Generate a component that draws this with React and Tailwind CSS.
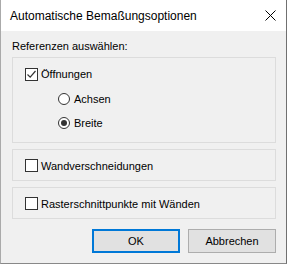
import React from 'react';

function CheckBox({ checked }) {
  return (
    <span className="w-[13px] h-[13px] border border-[#333333] bg-white flex items-center justify-center shrink-0">
      {checked && (
        <svg width="11" height="11" viewBox="0 0 11 11">
          <path d="M1.5 5.5 L4.2 8.2 L9.5 2" fill="none" stroke="#333333" strokeWidth="1.2" />
        </svg>
      )}
    </span>
  );
}

function Radio({ checked }) {
  return (
    <span className="w-[12px] h-[12px] rounded-full border border-[#333333] bg-white flex items-center justify-center shrink-0">
      {checked && <span className="w-[6px] h-[6px] rounded-full bg-[#333333]" />}
    </span>
  );
}

export default function App() {
  return (
    <div
      className="w-[287px] h-[264px] flex flex-col bg-[#f0f0f0] border-l border-r border-b border-l-[#aaaaaa] border-r-[#707070] border-b-[#888888] text-[11px] text-black"
      style={{ fontFamily: '"Liberation Sans", Arial, sans-serif' }}
    >
      {/* Title bar */}
      <div className="h-[31px] bg-white flex items-center justify-between pl-[9px] pr-[9px] shrink-0">
        <span className="text-[12px] leading-[16px]">Automatische Bemaßungsoptionen</span>
        <svg width="11" height="11" viewBox="0 0 11 11" className="mr-[1px]">
          <path d="M0.5 0.5 L10.5 10.5 M10.5 0.5 L0.5 10.5" stroke="#000000" strokeWidth="1" />
        </svg>
      </div>

      <div className="flex flex-col pl-[11px] pr-[10px] pt-[7px]">
        <div className="h-[16px] leading-[16px] mb-[3px]">Referenzen auswählen:</div>

        {/* Group 1 */}
        <div className="h-[86px] border border-[#dcdcdc] flex flex-col pt-[6px] pl-[12px]">
          <div className="h-[20px] flex items-center gap-[3px]">
            <CheckBox checked />
            <span className="leading-[16px]">Öffnungen</span>
          </div>
          <div className="h-[20px] mt-[5px] flex items-center gap-[4px] pl-[33px]">
            <Radio />
            <span className="leading-[16px]">Achsen</span>
          </div>
          <div className="h-[20px] mt-[4px] flex items-center gap-[4px] pl-[33px]">
            <Radio checked />
            <span className="leading-[16px]">Breite</span>
          </div>
        </div>

        {/* Group 2 */}
        <div className="h-[32px] mt-[6px] border border-[#dcdcdc] flex items-center pl-[12px] pt-[1px] gap-[3px]">
          <CheckBox />
          <span className="leading-[16px]">Wandverschneidungen</span>
        </div>

        {/* Group 3 */}
        <div className="h-[32px] mt-[6px] border border-[#dcdcdc] flex items-center pl-[12px] pt-[1px] gap-[3px]">
          <CheckBox />
          <span className="leading-[16px]">Rasterschnittpunkte mit Wänden</span>
        </div>

        {/* Buttons */}
        <div className="flex justify-end gap-[8px] mt-[10px]">
          <button className="w-[88px] h-[24px] bg-[#e1e1e1] border-2 border-[#0078d7] flex items-center justify-center leading-[16px]">
            OK
          </button>
          <button className="w-[88px] h-[24px] bg-[#e1e1e1] border border-[#adadad] flex items-center justify-center leading-[16px]">
            Abbrechen
          </button>
        </div>
      </div>
    </div>
  );
}
